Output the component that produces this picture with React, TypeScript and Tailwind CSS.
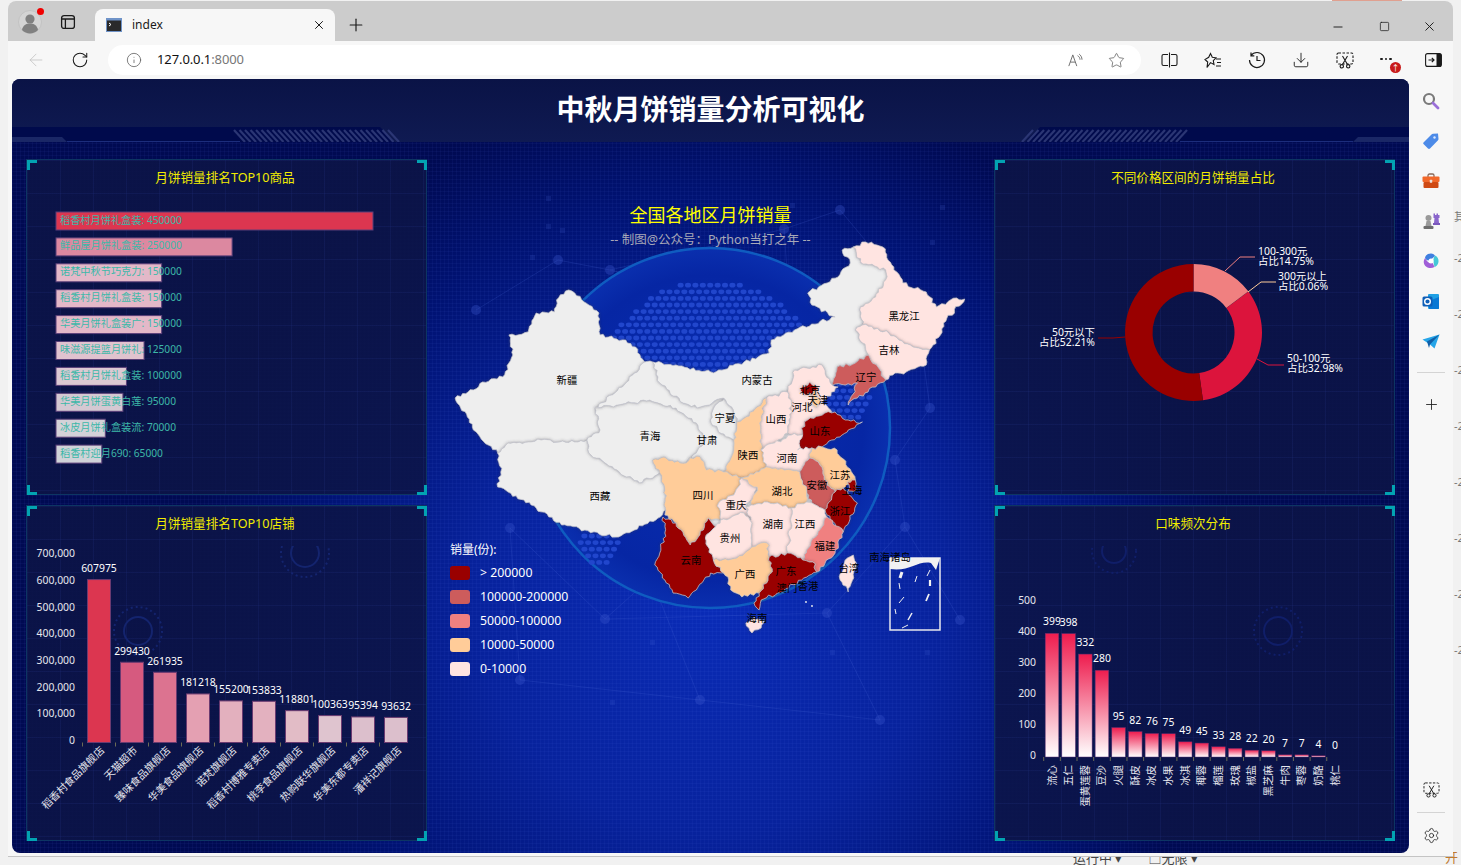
import { ArrowLeft, RotateCw, Info, Star, Download, X, Plus, Minus, Square, Settings } from "lucide-react";
import type { ReactNode } from "react";

type Pt = [number, number];

const H = "#990000";
const M = "#cd5c5c";
const S = "#f08080";
const T = "#ffcc99";
const P = "#ffe4e1";
const N = "#eeeeee";

// Provinces, in page pixels
const provinces: { fill: string; pts: number[] }[] = [
  { fill: N, pts: [567,290,573,293,597,313,597,325,598,335,620,340,633,347,642,362,620,387,593,408,598,430,585,440,573,442,540,440,527,442,507,443,497,453,473,430,467,417,455,398,473,390,482,382,502,377,512,355,508,335,527,332,535,313,553,312,555,300] },
  { fill: N, pts: [497,453,507,443,527,442,540,440,573,442,585,440,587,453,617,472,637,483,657,473,662,490,663,510,653,520,613,537,583,530,560,525,530,505,497,487,500,472] },
  { fill: N, pts: [593,408,647,400,673,408,693,423,703,438,693,453,683,463,658,458,650,460,657,473,637,483,617,472,587,453,585,440,598,430] },
  { fill: N, pts: [642,362,650,362,657,383,680,403,697,407,720,398,712,405,707,420,715,432,730,440,730,450,720,472,703,470,697,457,687,458,683,463,693,453,703,438,693,423,673,408,647,400,593,408,620,387] },
  { fill: N, pts: [720,398,728,407,733,422,730,440,715,432,707,420,712,405] },
  { fill: N, pts: [650,362,673,365,710,373,765,353,767,340,790,330,830,317,807,305,803,293,833,277,845,263,837,250,848,247,855,262,880,270,880,280,870,297,855,307,857,325,850,330,860,347,863,355,850,363,832,367,827,385,817,365,790,370,783,392,762,398,742,417,733,422,728,407,720,398,697,407,680,403,657,383] },
  { fill: P, pts: [848,247,860,242,877,247,888,270,897,283,920,292,930,307,950,298,958,299,937,323,934,335,923,350,907,347,883,333,857,325,855,307,870,297,880,280,880,270,855,262] },
  { fill: P, pts: [850,330,857,325,883,333,907,347,923,350,920,365,900,372,887,375,880,380,863,355,860,347] },
  { fill: M, pts: [863,355,880,380,852,398,843,405,852,383,840,385,827,385,832,367,850,363] },
  { fill: P, pts: [790,370,817,365,827,385,833,387,817,403,827,412,820,413,803,420,797,428,798,435,787,435,783,433,785,423,787,403,783,392] },
  { fill: H, pts: [805,382,813,388,808,395,798,393,797,387] },
  { fill: T, pts: [810,390,815,400,812,408,807,403,808,395] },
  { fill: P, pts: [762,398,783,392,787,403,785,423,783,433,770,443,757,450,757,417] },
  { fill: T, pts: [762,398,742,417,733,422,730,440,730,450,720,472,738,478,752,472,762,467,757,450,757,417] },
  { fill: H, pts: [830,412,840,420,857,422,843,430,842,432,817,447,807,448,793,450,798,435,797,428,803,420,820,413] },
  { fill: P, pts: [757,450,770,443,787,435,798,435,793,450,807,448,805,458,795,472,762,467] },
  { fill: T, pts: [807,448,817,447,832,450,842,467,850,480,838,488,830,492,822,485,815,465,805,458] },
  { fill: M, pts: [805,458,815,465,822,485,830,492,820,510,807,503,802,493,795,472] },
  { fill: H, pts: [842,482,850,480,851,490,843,491] },
  { fill: H, pts: [830,492,838,488,847,498,852,503,838,532,822,515,820,510] },
  { fill: T, pts: [650,460,658,458,683,463,687,458,697,457,703,470,720,472,738,478,730,495,715,503,717,520,705,518,700,530,687,545,673,523,662,515,663,510,662,490,657,473] },
  { fill: P, pts: [738,478,753,487,748,500,742,507,747,520,740,513,717,520,715,503,730,495] },
  { fill: T, pts: [752,472,762,467,795,472,802,493,802,502,787,508,773,503,760,502,747,505,753,487,738,478] },
  { fill: P, pts: [747,505,760,502,773,503,787,508,785,537,783,553,765,557,763,543,748,547,748,523,740,513,747,520,742,507] },
  { fill: P, pts: [787,508,802,502,807,503,820,510,822,517,817,527,802,550,798,560,783,553,785,537] },
  { fill: S, pts: [822,517,838,532,830,553,812,572,808,562,798,560,802,550,817,527] },
  { fill: H, pts: [660,517,673,523,687,545,700,530,705,518,712,527,702,538,710,560,720,573,707,573,693,590,685,598,670,593,662,580,652,565,657,553,662,533] },
  { fill: P, pts: [712,527,717,520,740,513,748,523,748,547,733,558,710,560,702,538] },
  { fill: T, pts: [710,560,733,558,748,547,763,543,765,557,768,572,755,593,738,597,727,590,725,580,720,573] },
  { fill: H, pts: [765,557,783,553,798,560,808,562,812,572,797,580,773,593,757,600,755,610,750,603,755,593,768,572] },
  { fill: P, pts: [742,623,750,617,760,620,757,628,748,633] },
  { fill: P, pts: [840,560,848,555,851,563,843,592,835,580] },
];

// fills the small slits left between neighbouring provinces
const land: { fill: string; pts: number[] }[] = [
  { fill: N, pts: [705,445,760,420,790,395,800,425,800,445,825,455,835,490,820,515,795,550,720,545,690,480] },
  { fill: P, pts: [858,330,900,345,915,355,895,368,875,372,865,350] },
  { fill: P, pts: [875,265,920,300,925,335,880,325,862,310] },
];

const mapLabels: [string, number, number][] = [
  ["新疆",567,380],["青海",650,436],["西藏",600,496],["甘肃",707,440],["内蒙古",757,380],["宁夏",725,418],["山西",776,419],
  ["河北",802,407],["北京",810,390],["天津",818,400],["山东",820,431],["辽宁",866,377],["吉林",889,350],["黑龙江",904,316],
  ["陕西",748,455],["河南",787,458],["四川",703,495],["重庆",736,505],["湖北",782,491],["安徽",817,485],["江苏",840,475],
  ["上海",852,490],["浙江",840,511],["湖南",773,524],["江西",805,524],["福建",825,546],["贵州",730,538],["云南",691,560],
  ["广西",745,574],["广东",786,571],["澳门",787,588],["香港",808,586],["台湾",849,568],["海南",757,618],["南海诸岛",890,557],
];

const legend: [string, string][] = [
  [H, "> 200000"],
  [M, "100000-200000"],
  [S, "50000-100000"],
  [T, "10000-50000"],
  [P, "0-10000"],
];

const products: [string, number, string][] = [
  ["稻香村月饼礼盒装", 450000, "#dc3650"],
  ["鲜品屋月饼礼盒装", 250000, "#dc88a0"],
  ["诺梵中秋节巧克力", 150000, "#e3b8c8"],
  ["稻香村月饼礼盒装", 150000, "#e3b8c8"],
  ["华美月饼礼盒装广", 150000, "#e3b8c8"],
  ["味滋源提篮月饼礼", 125000, "#e0c3cf"],
  ["稻香村月饼礼盒装", 100000, "#dcc9d3"],
  ["华美月饼蛋黄白莲", 95000, "#d4c8d2"],
  ["冰皮月饼礼盒装流", 70000, "#d4d2d8"],
  ["稻香村迎月690", 65000, "#d0d3d8"],
];

const shops: [string, number, string][] = [
  ["稻香村食品旗舰店", 607975, "#dc3650"],
  ["天猫超市", 299430, "#d65a7f"],
  ["臻味食品旗舰店", 261935, "#dc7390"],
  ["华美食品旗舰店", 181218, "#e4a0b2"],
  ["诺梵旗舰店", 155200, "#e3b0be"],
  ["稻香村博雅专卖店", 153833, "#e3b1bf"],
  ["桃李食品旗舰店", 118801, "#e2bcc6"],
  ["热购联华旗舰店", 100363, "#dfc4cf"],
  ["华美东都专卖店", 95394, "#dcbfcc"],
  ["潘祥记旗舰店", 93632, "#dcbfcc"],
];

const flavors: [string, number][] = [
  ["流心",399],["五仁",398],["蛋黄莲蓉",332],["豆沙",280],["火腿",95],["酥皮",82],["冰皮",76],["水果",75],["冰淇",49],
  ["椰蓉",45],["榴莲",33],["玫瑰",28],["椒盐",22],["黑芝麻",20],["牛肉",7],["枣蓉",7],["奶酪",4],["桃仁",0],
];

const fit = (x: number) => 440 + (x - 440) * 1.013;

// wobbly edge so the borders look like a real map; same result from both sides of a shared edge
function edge(a: Pt, b: Pt): Pt[] {
  const flip = a[0] > b[0] || (a[0] === b[0] && a[1] > b[1]);
  const [p, q] = flip ? [b, a] : [a, b];
  const len = Math.hypot(q[0] - p[0], q[1] - p[1]);
  const n = Math.max(1, Math.round(len / 3));
  const out: Pt[] = [];
  const seed = p[0] * 13.1 + p[1] * 7.7 + q[0] * 3.3 + q[1] * 5.9;
  for (let i = 1; i < n; i++) {
    const t = i / n;
    const w = Math.sin(seed + i * 12.9898) * 43758.5453;
    const off = (w - Math.floor(w) - 0.5) * 3.4;
    out.push([
      p[0] + (q[0] - p[0]) * t - ((q[1] - p[1]) / len) * off,
      p[1] + (q[1] - p[1]) * t + ((q[0] - p[0]) / len) * off,
    ]);
  }
  return flip ? out.reverse() : out;
}

function provincePath(pts: number[]) {
  const list: Pt[] = [];
  for (let i = 0; i < pts.length; i += 2) list.push([fit(pts[i]), pts[i + 1]]);
  const all: Pt[] = [];
  list.forEach((p, i) => {
    all.push(p);
    all.push(...edge(p, list[(i + 1) % list.length]));
  });
  return "M" + all.map((p) => `${p[0].toFixed(1)} ${p[1].toFixed(1)}`).join("L") + "Z";
}

function dotField() {
  const dots: Pt[] = [];
  for (let r = 0; r < 46; r++) {
    for (let c = 0; c < 56; c++) {
      const x = 540 + c * 7.4 + (r % 2 ? 3.7 : 0);
      const y = 272 + r * 6.6;
      const dome = Math.hypot(x - 712, y - 395) < 115;
      const bohai = Math.hypot(x - 848, y - 402) < 22;
      const south = Math.hypot(x - 600, y - 545) < 20;
      if (dome || bohai || south) dots.push([x, y]);
    }
  }
  return dots;
}

const netNodes: Pt[] = [
  [558,260],[610,270],[784,229],[790,312],[930,408],[510,528],[605,619],[651,578],[827,613],[905,527],[895,460],[476,310],[840,210],[960,620],[520,680],[700,700],[880,720],[915,300],
];
const netLines: [number, number][] = [
  [0,1],[1,2],[2,3],[0,11],[3,17],[17,4],[4,10],[10,9],[9,13],[8,9],[8,6],[6,7],[6,5],[5,14],[7,15],[8,16],[15,16],[2,12],[12,17],[14,15],[1,3],
];

const darkSquares: Pt[] = [[546,196],[546,224],[560,228],[530,255],[940,205],[930,240],[790,203],[650,640],[500,610],[830,650],[925,650],[610,700]];

function Panel({ title, children }: { title: string; children: ReactNode }) {
  return (
    <div className="relative w-[401px] h-[336px] border border-[#0d3563] bg-[linear-gradient(rgba(60,85,190,0.1)_1px,transparent_1px),linear-gradient(90deg,rgba(60,85,190,0.1)_1px,transparent_1px),linear-gradient(rgba(12,20,70,0.88),rgba(12,20,70,0.88))] bg-[size:33px_33px,33px_33px,100%_100%]">
      <span className="absolute left-0 top-0 w-[10px] h-[10px] border-l-[3px] border-t-[3px] border-[#02a3b2]" />
      <span className="absolute -right-px top-0 w-[10px] h-[10px] border-r-[3px] border-t-[3px] border-[#02a3b2]" />
      <span className="absolute left-0 -bottom-px w-[10px] h-[10px] border-l-[3px] border-b-[3px] border-[#02a3b2]" />
      <span className="absolute -right-px -bottom-px w-[10px] h-[10px] border-r-[3px] border-b-[3px] border-[#02a3b2]" />
      <div className="h-[40px] pr-[3px] pt-[9px] text-center text-[12.6px] leading-[18px] text-[#f2ec00]">{title}</div>
      {children}
    </div>
  );
}

function ProductChart() {
  return (
    <svg width="399" height="294" viewBox="27 200 399 294" className="block">
      {products.map(([name, v, color], i) => {
        const y = 221 + i * 25.9;
        return (
          <g key={i}>
            <rect x="56" y={y - 9} width={(v / 450000) * 317} height="18" fill={color} stroke="#5a3f78" strokeWidth="1" />
            <text x="60" y={y + 2.5} fontSize="10.2" fill="#3db8a8">{`${name}: ${v}`}</text>
          </g>
        );
      })}
    </svg>
  );
}

function ShopChart() {
  const base = 741.5;
  return (
    <svg width="399" height="294" viewBox="27 545 399 294" className="block">
      <g fill="none" stroke="#14246e" strokeWidth="2">
        <circle cx="138" cy="630" r="14" />
        <circle cx="138" cy="630" r="24" strokeDasharray="2 3" />
        <circle cx="305" cy="552" r="14" />
        <circle cx="305" cy="552" r="24" strokeDasharray="2 3" />
      </g>
      {[0, 1, 2, 3, 4, 5, 6, 7].map((n) => (
        <text key={n} x="75" y={739.5 - n * 26.7 + 3.5} textAnchor="end" fontSize="10.4" fill="#e6e6ee">
          {(n * 100000).toLocaleString("en-US")}
        </text>
      ))}
      {shops.map(([name, v, color], i) => {
        const cx = 99 + i * 33;
        const h = (v / 100000) * 26.8;
        return (
          <g key={i}>
            <line x1={cx - 16.5} x2={cx - 16.5} y1={base} y2={base + 4} stroke="#6b6b55" />
            <rect x={cx - 11.5} y={base - h} width="23" height={h} fill={color} stroke="#6a3a70" />
            <text x={cx} y={base - h - 7.5} textAnchor="middle" fontSize="10.4" fill="#ffffff">{v}</text>
            <text x={cx + 6} y="750" textAnchor="end" fontSize="10.4" fill="#e6e6ee" transform={`rotate(-45 ${cx + 6} 750)`}>{name}</text>
          </g>
        );
      })}
    </svg>
  );
}

function arc(a0: number, a1: number, R: number, r: number) {
  const cx = 1193.5;
  const cy = 332.5;
  const pt = (a: number, q: number) => `${cx + q * Math.sin(a)} ${cy - q * Math.cos(a)}`;
  const big = a1 - a0 > Math.PI ? 1 : 0;
  return `M${pt(a0, R)}A${R} ${R} 0 ${big} 1 ${pt(a1, R)}L${pt(a1, r)}A${r} ${r} 0 ${big} 0 ${pt(a0, r)}Z`;
}

function PriceChart() {
  const tau = Math.PI * 2;
  const a = 0.1475 * tau;
  const b = a + 0.0006 * tau;
  const c = b + 0.3298 * tau;
  return (
    <svg width="399" height="294" viewBox="995 200 399 294" className="block">
      <path d={arc(0, a, 68.5, 41)} fill="#f08080" />
      <path d={arc(a, b, 68.5, 41)} fill="#ffcc99" />
      <path d={arc(b, c, 68.5, 41)} fill="#dc143c" />
      <path d={arc(c, tau, 68.5, 41)} fill="#990000" />
      <g fill="none" strokeWidth="1">
        <polyline points="1225,271 1240,257 1255,257" stroke="#f08080" />
        <polyline points="1248,292 1261,282 1276,282" stroke="#ffcc99" />
        <polyline points="1257,359 1268,365 1284,365" stroke="#dc143c" />
        <polyline points="1125,337 1113,338 1098,338" stroke="#990000" />
      </g>
      <g fontSize="10.4" fill="#ffffff">
        <text x="1258" y="255">100-300元</text>
        <text x="1258" y="265">占比14.75%</text>
        <text x="1278" y="280">300元以上</text>
        <text x="1278" y="290">占比0.06%</text>
        <text x="1287" y="362">50-100元</text>
        <text x="1287" y="372">占比32.98%</text>
        <text x="1095" y="336" textAnchor="end">50元以下</text>
        <text x="1095" y="346" textAnchor="end">占比52.21%</text>
      </g>
    </svg>
  );
}

function FlavorChart() {
  const base = 756;
  return (
    <svg width="399" height="294" viewBox="995 545 399 294" className="block">
      <defs>
        <linearGradient id="flavorBar" x1="0" y1="0" x2="0" y2="1">
          <stop offset="0" stopColor="#ee1c4e" />
          <stop offset="1" stopColor="#ffffff" />
        </linearGradient>
      </defs>
      <g fill="none" stroke="#101e68" strokeWidth="2">
        <circle cx="1114" cy="550" r="12" />
        <circle cx="1114" cy="550" r="22" strokeDasharray="2 3" />
        <circle cx="1278" cy="630" r="14" />
        <circle cx="1278" cy="630" r="24" strokeDasharray="2 3" />
      </g>
      {[0, 1, 2, 3, 4, 5].map((n) => (
        <text key={n} x="1036" y={754 - n * 31 + 3.5} textAnchor="end" fontSize="10.4" fill="#e6e6ee">{n * 100}</text>
      ))}
      {flavors.map(([name, v], i) => {
        const cx = 1052 + i * 16.65;
        const h = v * 0.31;
        return (
          <g key={i}>
            <line x1={cx - 8.3} x2={cx - 8.3} y1={base} y2={base + 4} stroke="#6b6b55" />
            {v > 0 && <rect x={cx - 6.8} y={base - h} width="13.6" height={h} fill="url(#flavorBar)" stroke="#5a2f70" strokeWidth="0.5" />}
            <text x={cx} y={base - h - 8} textAnchor="middle" fontSize="10.4" fill="#ffffff">{v}</text>
            <text x={cx + 3.5} y="764" textAnchor="end" fontSize="10.4" fill="#e6e6ee" transform={`rotate(-90 ${cx + 3.5} 764)`}>{name}</text>
          </g>
        );
      })}
    </svg>
  );
}

function MapArt() {
  return (
    <svg width="567" height="694" viewBox="427 159 567 694" className="absolute left-0 top-0">
      <defs>
        <radialGradient id="globe" cx="0.5" cy="0.5" r="0.5">
          <stop offset="0" stopColor="#0a2fb4" />
          <stop offset="0.85" stopColor="#0626a4" />
          <stop offset="1" stopColor="#0a2fae" />
        </radialGradient>
        <filter id="soft" x="-20%" y="-20%" width="140%" height="140%">
          <feDropShadow dx="0" dy="0" stdDeviation="1.4" floodColor="#3a3a4a" floodOpacity="0.5" />
        </filter>
      </defs>
      {netLines.map(([a, b], i) => (
        <line key={i} x1={netNodes[a][0]} y1={netNodes[a][1]} x2={netNodes[b][0]} y2={netNodes[b][1]} stroke="#4a68d8" strokeOpacity="0.2" />
      ))}
      {netNodes.map((p, i) => (
        <circle key={i} cx={p[0]} cy={p[1]} r="5" fill="#3d5bd0" fillOpacity="0.32" />
      ))}
      {darkSquares.map((p, i) => (
        <rect key={i} x={p[0]} y={p[1]} width="5" height="5" fill="#4a68d8" fillOpacity="0.16" />
      ))}
      <circle cx="710" cy="428" r="180" fill="url(#globe)" stroke="#0f5cc0" strokeWidth="2.5" />
      {dotField().map((p, i) => (
        <ellipse key={i} cx={p[0]} cy={p[1]} rx="3" ry="2.4" fill="#2146cc" />
      ))}
      {land.map((p, i) => (
        <polygon key={i} points={p.pts.join(" ")} fill={p.fill} />
      ))}
      {provinces.map((p, i) => (
        <path key={i} d={provincePath(p.pts)} fill={p.fill} stroke="#c9c9cf" strokeWidth="0.7" filter="url(#soft)" />
      ))}
      <g fill="#f2f2f2">
        <circle cx="806" cy="602" r="0.9" />
        <circle cx="812" cy="606" r="0.9" />
      </g>
      <rect x="890" y="558" width="50" height="72" fill="none" stroke="#e8e8ee" strokeWidth="1.5" />
      <path d="M890 558H940L936 570L931 563C918 560 910 572 890 569Z" fill="#f2f2f2" />
      <g stroke="#f2f2f2" fill="none" strokeWidth="1">
        <path d="M902 572L900 578" strokeWidth="3" />
        <path d="M899 583L900 589" />
        <path d="M904 597L899 603" />
        <path d="M895 609L896 614" />
        <path d="M912 613L908 620" strokeWidth="1.5" />
        <path d="M908 625L902 628" />
        <path d="M917 576L915 582" />
        <path d="M930 570L927 576" />
        <path d="M930 580V586" strokeWidth="2.2" />
        <path d="M929 594L926 601" strokeWidth="1.8" />
      </g>
      <g fontSize="10.4" fill="#000000" textAnchor="middle">
        {mapLabels.map(([name, x, y]) => (
          <text key={name} x={x} y={y + 3.5}>{name}</text>
        ))}
      </g>
    </svg>
  );
}

function HeaderArt() {
  const hatch = Array.from({ length: 29 }, (_, i) => i);
  return (
    <svg width="1397" height="63" viewBox="12 79 1397 63" className="absolute left-0 top-0">
      <path d="M12 127H380L395 142H12Z" fill="#000a4c" />
      <path d="M1409 127H1040L1025 142H1409Z" fill="#000a4c" />
      <path d="M12 137H62L67 142H12Z" fill="#1a2766" />
      <path d="M1409 137H1358L1353 142H1409Z" fill="#1a2766" />
      <path d="M67 141.5H240M1180 141.5H1353" stroke="#1c2d7c" />
      <g stroke="#2b3674" strokeWidth="2.2">
        {hatch.map((i) => (
          <path key={i} d={`M${234 + i * 5.5} 130L${245 + i * 5.5} 142`} />
        ))}
        {hatch.map((i) => (
          <path key={i} d={`M${1187 - i * 5.5} 130L${1176 - i * 5.5} 142`} />
        ))}
      </g>
    </svg>
  );
}

function ToolIcon({ children }: { children: ReactNode }) {
  return <div className="relative flex h-[38px] w-[44px] shrink-0 items-center justify-center text-[#1a1a1a]">{children}</div>;
}

function SideIcon({ children }: { children: ReactNode }) {
  return <div className="flex h-[40px] w-[44px] items-center justify-center">{children}</div>;
}

function TitleBar() {
  return (
    <div className="flex h-[40px] items-end bg-[#cccccc] pl-[7px]">
      <div className="relative mb-[3px] flex h-[32px] w-[30px] items-center justify-center">
        <svg width="24" height="24" viewBox="0 0 24 24">
          <circle cx="12" cy="12" r="11.5" fill="#d4d4d4" stroke="#c2c2c2" />
          <circle cx="12" cy="9" r="4.6" fill="#808080" />
          <path d="M4 20c1-5 4-6.5 8-6.5s7 1.5 8 6.5c-2 2.300-5 3.500-8 3.500s-6-1.200-8-3.500Z" fill="#808080" />
        </svg>
        <span className="absolute right-[1px] top-[2px] h-[7px] w-[7px] rounded-full bg-[#f00000]" />
      </div>
      <div className="mb-[7px] ml-[15px] flex h-[24px] w-[35px] items-center">
        <svg width="16" height="16" viewBox="0 0 16 16" fill="none" stroke="#1a1a1a" strokeWidth="1.3">
          <rect x="1.600" y="1.600" width="12.800" height="12.800" rx="2.500" />
          <path d="M1.600 5H14.400M5.400 5V14.400" />
        </svg>
      </div>
      <div className="flex h-[32px] w-[240px] items-center rounded-t-[8px] bg-[#f7f7f7] pl-[11px] pr-[9px]">
        <svg width="16" height="16" viewBox="0 0 16 16">
          <rect width="16" height="14" y="1" fill="#6f93c8" />
          <rect x="1" y="3.500" width="14" height="10.500" fill="#2a2a2a" />
          <path d="M3 6L5 7.500L3 9" stroke="#ffffff" fill="none" />
        </svg>
        <span className="ml-[10px] flex-1 text-[12px] text-[#1a1a1a]">index</span>
        <X size={14} strokeWidth={1.700} className="text-[#1a1a1a]" />
      </div>
      <div className="mb-[6px] ml-[11px] flex h-[20px] w-[20px] items-center justify-center">
        <Plus size={20} strokeWidth={1.400} className="text-[#1a1a1a]" />
      </div>
      <div className="mb-[7px] ml-auto flex items-center text-[#1a1a1a]">
        <div className="flex w-[46px] justify-center"><Minus size={14} strokeWidth={1.600} /></div>
        <div className="flex w-[46px] justify-center"><Square size={11} strokeWidth={1.600} /></div>
        <div className="flex w-[46px] justify-center pr-[1px]"><X size={15} strokeWidth={1.500} /></div>
      </div>
    </div>
  );
}

function ToolBar() {
  return (
    <div className="flex h-[38px] items-start bg-[#f7f7f7] pl-[6px]">
      <ToolIcon><ArrowLeft size={20} strokeWidth={1} className="text-[#c4c4c4]" /></ToolIcon>
      <ToolIcon><RotateCw size={18} strokeWidth={1.400} /></ToolIcon>
      <div className="ml-[6px] mt-[4px] flex h-[30px] w-[1033px] shrink-0 items-center rounded-full bg-white pl-[18px]">
        <Info size={16} strokeWidth={1.200} className="text-[#5f5f5f]" />
        <span className="ml-[15px] text-[13px] tracking-[-0.1px] text-[#111111]">
          127.0.0.1<span className="text-[#777777]">:8000</span>
        </span>
        <div className="ml-auto flex items-center pr-[5px]">
          <div className="flex w-[40px] justify-center">
            <svg width="16" height="15" viewBox="0 0 20 18" fill="none" stroke="#6b6b6b" strokeWidth="1.200">
              <path d="M1 16L6 2L11 16M3 11H9" />
              <path d="M12 3c2 1 3 3 3 5M14 1c2 1.500 3.500 4 3.500 7" />
            </svg>
          </div>
          <div className="flex w-[40px] justify-center"><Star size={17} strokeWidth={1.100} className="text-[#5f5f5f]" /></div>
        </div>
      </div>
      <div className="ml-[6px] flex">
        <ToolIcon>
          <svg width="17" height="16" viewBox="0 0 17 16" fill="none" stroke="#1a1a1a" strokeWidth="1.100">
            <path d="M7 2.500H2.500A1.500 1.500 0 0 0 1 4V12A1.500 1.500 0 0 0 2.500 13.500H7M10 2.500H14.500A1.500 1.500 0 0 1 16 4V12A1.500 1.500 0 0 1 14.500 13.500H10M8.500 0.500V15.500" />
          </svg>
        </ToolIcon>
        <ToolIcon>
          <svg width="18" height="17" viewBox="0 0 18 17" fill="none" stroke="#1a1a1a" strokeWidth="1.100">
            <path d="M6.500 1.500L8.300 5.300L12 5.800L9.300 8.600L10 12.500L6.500 10.600L3 15.500L3.700 10L1 7.500L4.700 5.300Z" />
            <path d="M12 7H17M13 10.500H17M12 14H17" />
          </svg>
        </ToolIcon>
        <ToolIcon>
          <svg width="18" height="18" viewBox="0 0 18 18" fill="none" stroke="#1a1a1a" strokeWidth="1.200">
            <path d="M3 4.500A7.500 7.500 0 1 1 1.500 9M3 1.500V4.800H6.300M9 5V9.500H12.500" />
          </svg>
        </ToolIcon>
        <ToolIcon><Download size={18} strokeWidth={1.200} /></ToolIcon>
        <ToolIcon>
          <svg width="18" height="17" viewBox="0 0 18 17" fill="none" stroke="#1a1a1a" strokeWidth="1.100">
            <rect x="1" y="1" width="16" height="11" rx="1.500" strokeDasharray="2.500 1.500" />
            <path d="M6.500 4L11.500 12.500M11.500 4L6.500 12.500" />
            <circle cx="5.800" cy="14.300" r="1.700" />
            <circle cx="12.200" cy="14.300" r="1.700" />
          </svg>
        </ToolIcon>
        <ToolIcon>
          <div className="flex -translate-y-[1px] gap-[2px] pr-[6px]">
            <span className="h-[2.500px] w-[2.500px] rounded-full bg-[#1a1a1a]" />
            <span className="h-[2.500px] w-[2.500px] rounded-full bg-[#1a1a1a]" />
            <span className="h-[2.500px] w-[2.500px] rounded-full bg-[#1a1a1a]" />
          </div>
          <span className="absolute left-[23px] top-[21px] flex h-[11px] w-[11px] items-center justify-center rounded-full bg-[#c81a1a] text-[8px] leading-none text-white">↑</span>
        </ToolIcon>
        <ToolIcon>
          <svg width="17" height="14" viewBox="0 0 17 14">
            <rect x="0.600" y="0.600" width="15.800" height="12.800" rx="2" fill="none" stroke="#1a1a1a" strokeWidth="1.100" />
            <path d="M11.500 0.600H14.500A2 2 0 0 1 16.400 2.600V11.400A2 2 0 0 1 14.500 13.400H11.500Z" fill="#1a1a1a" />
            <path d="M3.500 7H9M6.800 4.800L9 7L6.800 9.200" fill="none" stroke="#1a1a1a" strokeWidth="1.200" />
          </svg>
        </ToolIcon>
      </div>
    </div>
  );
}

function SideBar() {
  return (
    <div className="flex w-[44px] flex-col items-center pt-[2px]">
      <SideIcon>
        <svg width="18" height="18" viewBox="0 0 18 18" fill="none">
          <circle cx="7" cy="7" r="5" stroke="#7a7a7a" strokeWidth="2.200" />
          <path d="M11 11L16 16" stroke="#9a6fd8" strokeWidth="2.800" strokeLinecap="round" />
        </svg>
      </SideIcon>
      <SideIcon>
        <svg width="18" height="18" viewBox="0 0 18 18">
          <path d="M1.500 10.500L9.500 2.500C10 2 10.500 1.800 11 1.800L16 1.500L16.500 7C16.500 7.500 16.300 8 15.800 8.500L8 16.500C7.500 17 6.500 17 6 16.500L1.500 12C1 11.500 1 11 1.500 10.500Z" fill="#4d8be8" />
          <circle cx="12.500" cy="5.500" r="1.200" fill="#d9e8ff" />
        </svg>
      </SideIcon>
      <SideIcon>
        <svg width="18" height="16" viewBox="0 0 18 16">
          <path d="M6 4V2.500C6 1.700 6.700 1 7.500 1H10.500C11.300 1 12 1.700 12 2.500V4" fill="none" stroke="#8a6a5a" strokeWidth="1.300" />
          <rect x="0.500" y="3.500" width="17" height="5.500" rx="1" fill="#f2682a" />
          <rect x="1.500" y="9" width="15" height="6" rx="1" fill="#cf4a14" />
          <rect x="7.800" y="6.800" width="2.400" height="3" rx="0.500" fill="#e9e0da" />
        </svg>
      </SideIcon>
      <SideIcon>
        <svg width="19" height="18" viewBox="0 0 19 18">
          <circle cx="6.500" cy="6" r="3" fill="#9a9a9a" />
          <path d="M4.500 9H8.500L9.500 14H3.500Z" fill="#9a9a9a" />
          <rect x="1.500" y="14" width="10" height="3" rx="1" fill="#6e6e6e" />
          <path d="M11.500 1.500H13V3H14.500V1.500H16V3H17.500V1.500V6H16.500L17 11H12L12.500 6H11.500Z" fill="#8a66cc" />
          <rect x="11" y="11" width="7" height="2" fill="#7a58bc" />
        </svg>
      </SideIcon>
      <SideIcon>
        <svg width="18" height="18" viewBox="0 0 18 18" fill="none">
          <path d="M3 6C3.500 3 6 1.500 9 1.500C11 1.500 12.500 2.500 13 4L9 7.500C7 9 5 9 3 6Z" fill="#3f7fe0" />
          <path d="M13 3.500C15.500 4.500 16.800 7 16.500 10C16 13 14 14.500 12.500 15L11.500 10C11 8 12 5 13 3.500Z" fill="#44c8d8" />
          <path d="M3 6C1 9 1.500 12.500 4 14.500C6.500 16.500 10 16.500 12.500 15L10.500 10.500C8 12 5 10 3 6Z" fill="#a05fd8" />
          <circle cx="9" cy="9" r="2.500" fill="#ffffff" />
        </svg>
      </SideIcon>
      <SideIcon>
        <svg width="18" height="17" viewBox="0 0 18 17">
          <rect x="6" y="1" width="11" height="15" rx="1" fill="#1fa0e4" />
          <path d="M7 8L17 4V15C17 15.500 16.500 16 16 16H7Z" fill="#0a78d4" />
          <rect x="0.500" y="3.500" width="10" height="10" rx="1.500" fill="#0f5fb8" />
          <circle cx="5.500" cy="8.500" r="2.800" fill="none" stroke="#ffffff" strokeWidth="1.400" />
        </svg>
      </SideIcon>
      <SideIcon>
        <svg width="18" height="15" viewBox="0 0 18 15">
          <path d="M0.500 5.500L17.500 0.500L12.500 14.500L8 10.500Z" fill="#26a5e8" />
          <path d="M5 7.500L17.500 0.500L8 10.500L7 14Z" fill="#0f5fa8" />
        </svg>
      </SideIcon>
      <div className="mt-[11px] h-px w-[28px] bg-[#d4d4d4]" />
      <div className="mt-[11px]"><SideIcon><Plus size={17} strokeWidth={1.200} className="text-[#1a1a1a]" /></SideIcon></div>
      <div className="mt-auto"><SideIcon>
        <svg width="17" height="16" viewBox="0 0 18 17" fill="none" stroke="#1a1a1a" strokeWidth="1">
          <rect x="1" y="1" width="16" height="11" rx="1.500" strokeDasharray="2.500 1.500" />
          <path d="M6.500 4L11.500 12.500M11.500 4L6.500 12.500" />
          <circle cx="5.800" cy="14.300" r="1.700" />
          <circle cx="12.200" cy="14.300" r="1.700" />
        </svg>
      </SideIcon></div>
      <div className="mt-[2px] h-px w-[28px] bg-[#d4d4d4]" />
      <div className="mb-[1px] mt-[2px]"><SideIcon><Settings size={17} strokeWidth={1.100} className="text-[#1a1a1a]" /></SideIcon></div>
    </div>
  );
}

export default function App() {
  return (
    <div className="relative h-[865px] w-[1461px] overflow-hidden bg-[#f1f1f1] pt-[1px] [font-family:'Noto_Sans','Noto_Sans_CJK_SC',sans-serif]">
      {/* bits of the windows behind */}
      <div className="absolute left-[1332px] top-0 h-[1px] w-[70px] bg-[#e0a090]" />
      <div className="absolute left-[1073px] top-[849px] flex gap-[26px] text-[13px] text-[#444444]">
        <span>运行中 ▾</span>
        <span>□无限 ▾</span>
      </div>
      <div className="absolute left-[1445px] top-[848px] text-[13px] text-[#c07a30]">开通</div>
      <div className="absolute left-[1454px] top-[204px] flex flex-col text-[11px] leading-[56px] text-[#777777]">
        <span className="leading-[26px]">其</span>
        <span>-2</span>
        <span>-2</span>
        <span>-2</span>
        <span>-2</span>
        <span>-2</span>
        <span>-2</span>
        <span>-2</span>
        <span>-2</span>
      </div>

      <div className="relative ml-[8px] flex h-[856px] w-[1445px] flex-col overflow-hidden rounded-t-[8px] border-b border-[#c4c4c4] bg-[#f7f7f7]">
        <TitleBar />
        <ToolBar />
        <div className="flex flex-1">
          <div className="ml-[4px] h-[774px] w-[1397px] overflow-hidden rounded-[8px] bg-[#000a52] bg-[linear-gradient(rgba(110,140,255,0.05)_1px,transparent_1px),linear-gradient(90deg,rgba(110,140,255,0.05)_1px,transparent_1px),radial-gradient(ellipse_520px_520px_at_698px_520px,#0a2cb8_0%,#07229c_45%,#001272_78%,#000a52_100%)] bg-[size:4px_4px,4px_4px,100%_100%]">
            <div className="relative h-[63px] bg-[linear-gradient(#0a1346,#0f1a52)]">
              <HeaderArt />
              <h1 className="relative pt-[12px] text-center text-[28px] font-bold leading-[36px] text-white">中秋月饼销量分析可视化</h1>
            </div>
            <div className="mt-[17px] grid grid-cols-[401px_1fr_401px] px-[14px]">
              <div className="flex flex-col gap-[10px]">
                <Panel title="月饼销量排名TOP10商品"><ProductChart /></Panel>
                <Panel title="月饼销量排名TOP10店铺"><ShopChart /></Panel>
              </div>
              <div className="relative flex flex-col">
                <MapArt />
                <div className="relative pt-[45px] text-center">
                  <div className="text-[18px] leading-[22px] text-[#ffff00]">全国各地区月饼销量</div>
                  <div className="mt-[6px] text-[12.500px] leading-[16px] text-[#a9a9b8]">-- 制图@公众号：Python当打之年 --</div>
                </div>
                <div className="relative ml-[23px] mt-[294px] flex flex-col gap-[8px] text-white">
                  <div className="text-[12px] leading-[15px]">销量(份):</div>
                  {legend.map(([color, label]) => (
                    <div key={label} className="flex h-[16px] items-center gap-[10px] text-[12.300px]">
                      <span className="h-[14px] w-[20px] rounded-[3px]" style={{ backgroundColor: color }} />
                      <span>{label}</span>
                    </div>
                  ))}
                </div>
              </div>
              <div className="flex flex-col gap-[10px]">
                <Panel title="不同价格区间的月饼销量占比"><PriceChart /></Panel>
                <Panel title="口味频次分布"><FlavorChart /></Panel>
              </div>
            </div>
          </div>
          <SideBar />
        </div>
      </div>
    </div>
  );
}
